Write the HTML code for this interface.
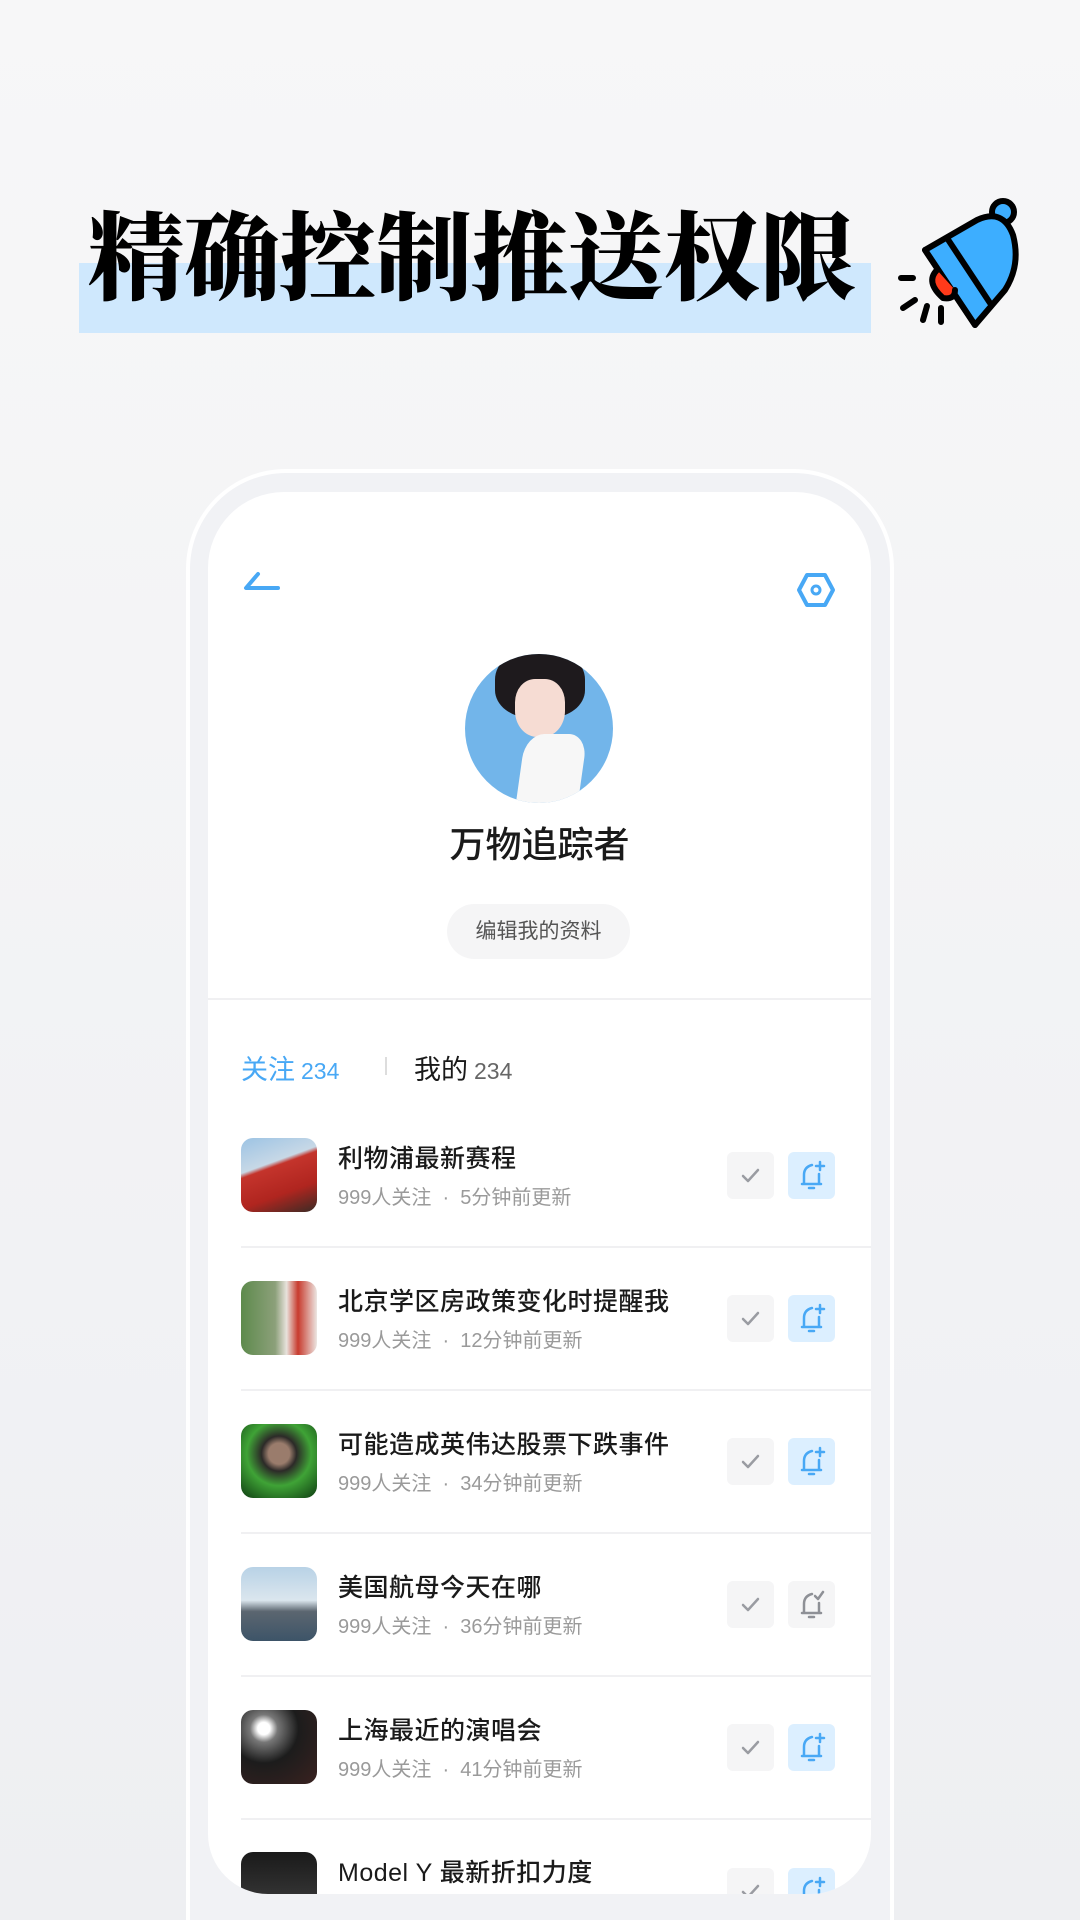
<!DOCTYPE html>
<html style="width:1080px;height:1920px;overflow:hidden"><head><meta charset="utf-8"><style>
*{margin:0;padding:0;box-sizing:border-box}
body{width:1080px;height:1920px;overflow:hidden;font-family:"Liberation Sans","Noto Sans CJK SC",sans-serif;position:relative}
#wrap{position:absolute;left:0;top:0;width:1080px;height:1920px;overflow:hidden;background:linear-gradient(#f7f7f8,#eeeff2)}
.hl{position:absolute;left:79px;top:263px;width:792px;height:70px;background:#cfe8fd}
.title{position:absolute;left:88px;top:200px;font-family:"Liberation Serif","Noto Serif CJK SC",serif;font-weight:900;font-size:96px;line-height:120px;color:#000;white-space:nowrap}
.frame{position:absolute;left:186px;top:469px;width:708px;height:1451px;border-radius:100px 100px 0 0;background:#f1f2f5;border:4px solid #fff;border-bottom:none}
.screen{position:absolute;left:208px;top:492px;width:663px;height:1402px;border-radius:76px 76px 60px 60px;background:#fff;overflow:hidden}
.abs{position:absolute}
.name{left:0;width:663px;text-align:center;font-size:36px;font-weight:500;color:#1a1a1a;line-height:50px}
.btn{left:239px;top:412px;width:183px;height:55px;border-radius:28px;background:#f5f5f6;color:#555;font-size:21px;line-height:55px;text-align:center}
.row{position:absolute;left:33px;width:630px;height:143px}
.thumb{position:absolute;left:0;top:0;width:76px;height:74px;border-radius:12px;overflow:hidden}
.rt{position:absolute;left:97px;top:1px;font-size:25px;font-weight:500;color:#1a1a1a;white-space:nowrap;letter-spacing:.5px}
.rs{position:absolute;left:97px;top:43px;font-size:20px;color:#9a9a9a;white-space:nowrap}
.ck{position:absolute;left:486px;top:14px;width:47px;height:47px;border-radius:6px;background:#f5f5f6}
.bl{position:absolute;left:547px;top:14px;width:47px;height:47px;border-radius:6px;background:#dcefff}
.bl.g{background:#f5f5f6}
.div{position:absolute;left:0;right:0;top:108px;height:2px;background:#f0f0f2}
.n{font-size:23px;margin-left:6px}
</style></head><body><div id="wrap">
<div class="hl"></div>
<div class="title">精确控制推送权限</div>
<svg class="abs" style="left:885px;top:190px" width="140" height="145" viewBox="0 0 140 145">
 <g stroke="#000" stroke-width="6" stroke-linecap="round" stroke-linejoin="round">
  <circle cx="118" cy="22" r="11" fill="#3daeff"/>
  <path d="M40 60 L92 30 Q118 18 128 45 Q136 75 120 100 L90 135 Z" fill="#3daeff"/>
  <path d="M40 60 L90 135" fill="none"/>
  <path d="M62 48 L105 113" fill="none"/>
  <path d="M52 80 Q40 92 58 108 Q70 110 70 100" fill="#ff3a1a"/>
  <path d="M16 88 L28 88 M18 118 L30 110 M38 130 L42 116 M56 132 L56 118" fill="none"/>
 </g>
</svg>
<div class="frame"></div>
<div class="screen">
 <svg class="abs" style="left:34px;top:78px" width="40" height="24"><path d="M16 4 L4 18 L36 18" fill="none" stroke="#48a8f5" stroke-width="4" stroke-linecap="round" stroke-linejoin="round"/></svg>
 <svg class="abs" style="left:588px;top:80px" width="40" height="36"><path d="M11 3 L29 3 L37 18 L29 33 L11 33 L3 18 Z" fill="none" stroke="#48a8f5" stroke-width="4" stroke-linejoin="round"/><circle cx="20" cy="18" r="4" fill="none" stroke="#48a8f5" stroke-width="3"/></svg>
 <div class="abs" style="left:257px;top:162px;width:148px;height:149px;border-radius:50%;background:#72b5ea;overflow:hidden">
  <div class="abs" style="left:30px;top:-6px;width:90px;height:70px;border-radius:45% 45% 40% 40%;background:#1e1a1d"></div>
  <div class="abs" style="left:50px;top:25px;width:50px;height:58px;border-radius:40% 40% 45% 45%;background:#f6dcd3"></div>
  <div class="abs" style="left:55px;top:80px;width:62px;height:80px;border-radius:30% 30% 0 0;background:#f7f7f7;transform:skewX(-8deg)"></div>
 </div>
 <div class="abs name" style="top:328px">万物追踪者</div>
 <div class="abs btn">编辑我的资料</div>
 <div class="abs" style="left:0;right:0;top:506px;height:2px;background:#f0f0f2"></div>
 <div class="abs" style="left:33px;top:556px;font-size:27px;color:#48a8f5;white-space:nowrap">关注<span class="n">234</span></div>
 <div class="abs" style="left:177px;top:565px;width:2px;height:18px;background:#ddd"></div>
 <div class="abs" style="left:206px;top:556px;font-size:27px;color:#1a1a1a;white-space:nowrap">我的<span class="n" style="color:#666">234</span></div>

 <div class="row" style="top:646px"><div class="thumb" style="background:linear-gradient(160deg,#9cc3e4 0%,#c7d8e6 35%,#c4342c 40%,#b0251f 70%,#3a2b25 100%)"></div><div class="rt">利物浦最新赛程</div><div class="rs">999人关注 &nbsp;·&nbsp; 5分钟前更新</div><div class="ck"></div><div class="bl"></div><div class="div"></div></div>
 <div class="row" style="top:789px"><div class="thumb" style="background:linear-gradient(90deg,#5d8a4c 0%,#8ca07a 45%,#e8e2dc 60%,#c83b2e 75%,#ece6e2 100%)"></div><div class="rt">北京学区房政策变化时提醒我</div><div class="rs">999人关注 &nbsp;·&nbsp; 12分钟前更新</div><div class="ck"></div><div class="bl"></div><div class="div"></div></div>
 <div class="row" style="top:932px"><div class="thumb" style="background:radial-gradient(circle at 50% 40%,#9a7c6c 0 18%,#2c2a28 30%,#3fa336 55%,#0f3d12 100%)"></div><div class="rt">可能造成英伟达股票下跌事件</div><div class="rs">999人关注 &nbsp;·&nbsp; 34分钟前更新</div><div class="ck"></div><div class="bl"></div><div class="div"></div></div>
 <div class="row" style="top:1075px"><div class="thumb" style="background:linear-gradient(#b8d2e6 0%,#dbe6ee 45%,#5b6670 60%,#3d5468 100%)"></div><div class="rt">美国航母今天在哪</div><div class="rs">999人关注 &nbsp;·&nbsp; 36分钟前更新</div><div class="ck"></div><div class="bl g"></div><div class="div"></div></div>
 <div class="row" style="top:1218px"><div class="thumb" style="background:radial-gradient(circle at 30% 25%,#fff 0 8%,#777 18%,#1c1c1c 45%,#3a2220 100%)"></div><div class="rt">上海最近的演唱会</div><div class="rs">999人关注 &nbsp;·&nbsp; 41分钟前更新</div><div class="ck"></div><div class="bl"></div><div class="div"></div></div>
 <div class="row" style="top:1360px"><div class="thumb" style="background:linear-gradient(#1a1a1a,#444)"></div><div class="rt">Model Y 最新折扣力度</div><div class="ck" style="top:16px"></div><div class="bl" style="top:16px"></div></div>
</div>
</div>
<svg width="0" height="0" style="position:absolute"><defs>
<symbol id="c" viewBox="0 0 47 47"><path d="M16 24 L21 29 L31 18" fill="none" stroke="#9a9ca2" stroke-width="2.5" stroke-linecap="round" stroke-linejoin="round"/></symbol>
<symbol id="b" viewBox="0 0 47 47"><g fill="none" stroke="#48a8f5" stroke-width="2.5" stroke-linecap="round"><path d="M14 32 L33 32 M16 32 L16 23 Q16 15 24 13 M31 22 L31 32 M21 36 L26 36 M32 10 L32 18 M28 14 L36 14"/></g></symbol>
<symbol id="bg" viewBox="0 0 47 47"><g fill="none" stroke="#8e9096" stroke-width="2.5" stroke-linecap="round" stroke-linejoin="round"><path d="M14 32 L33 32 M16 32 L16 23 Q16 15 24 13 M31 22 L31 32 M21 36 L26 36 M27 15 L30 18 L35 11"/></g></symbol>
</defs></svg>
<script>
document.querySelectorAll('.ck').forEach(e=>e.innerHTML='<svg width="47" height="47"><use href="#c"/></svg>');
document.querySelectorAll('.bl').forEach(e=>e.innerHTML='<svg width="47" height="47"><use href="#'+(e.classList.contains('g')?'bg':'b')+'"/></svg>');
</script>
</body></html>
